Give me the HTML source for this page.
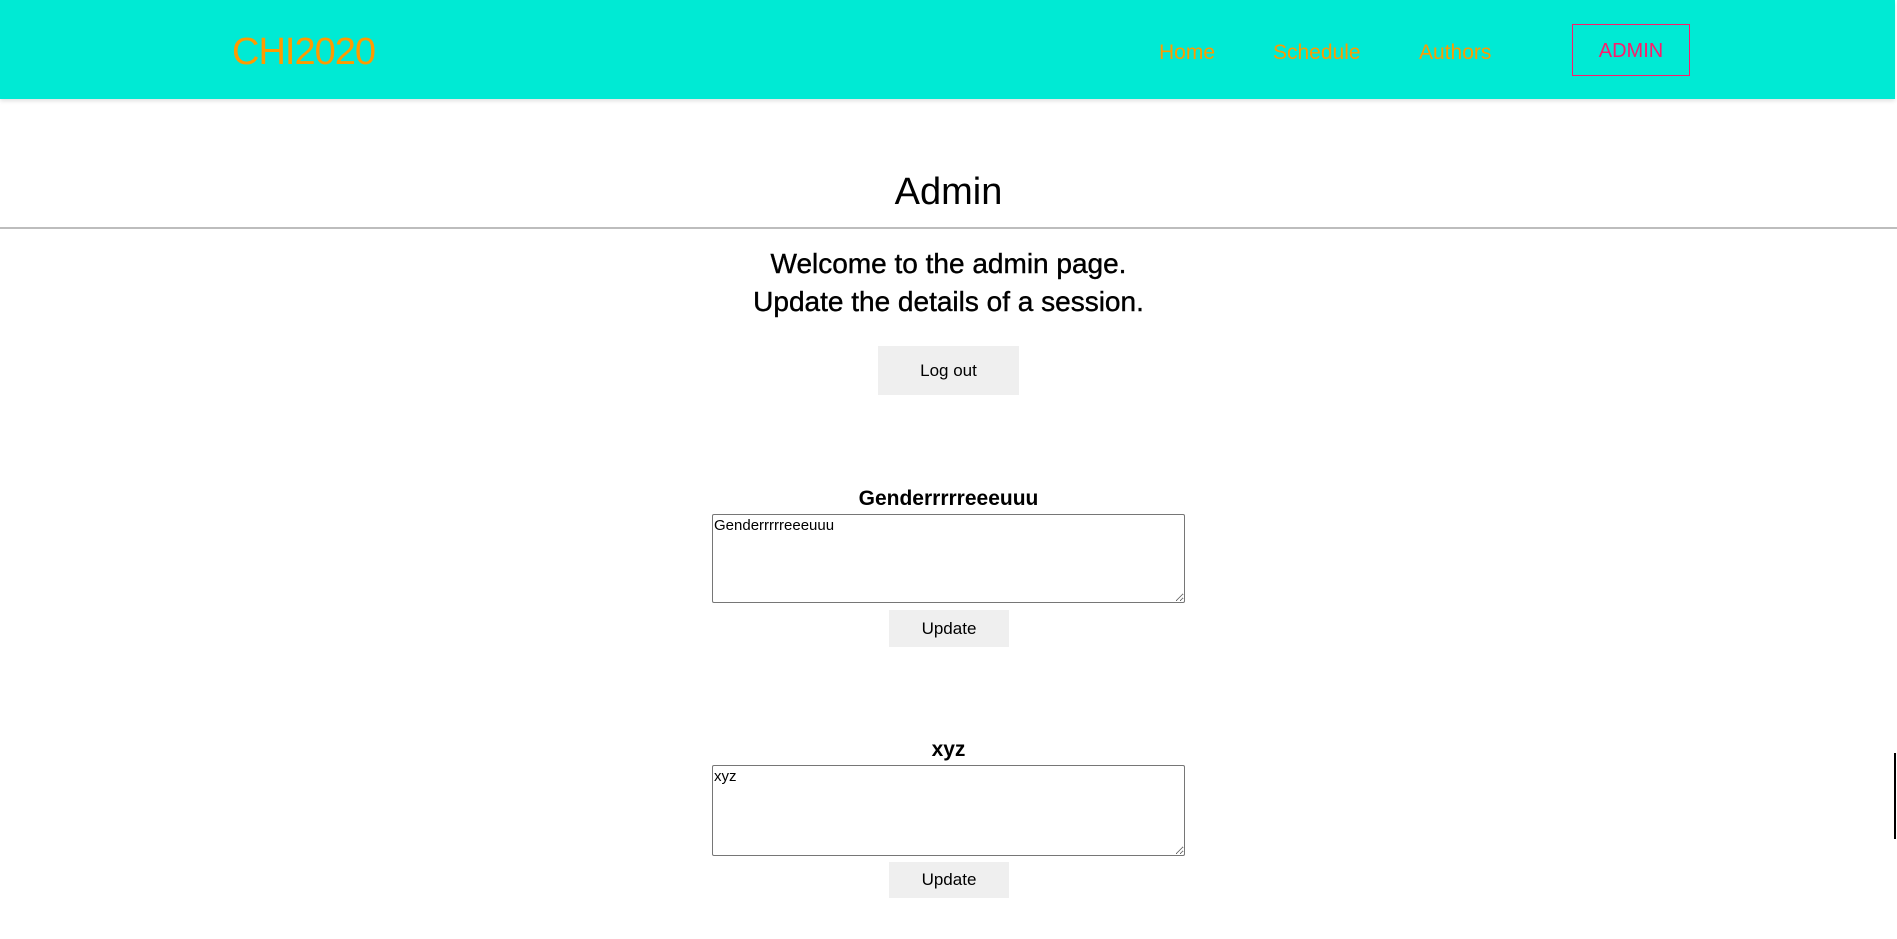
<!DOCTYPE html>
<html><head><meta charset="utf-8"><style>
body{margin:0;width:1897px;height:939px;position:relative;overflow:hidden;background:#fff;font-family:"Liberation Sans",sans-serif;color:#000}
.a{position:absolute}
header{position:absolute;left:0;top:0;width:1895px;height:99px;background:#00ead4;box-shadow:0 2px 4px rgba(0,0,0,.12)}
.nav{color:#ff9a00;font-size:21px;top:41px}
.c{text-align:center;left:0;width:1897px}
.btn{background:#efefef;text-align:center}
textarea{position:absolute;box-sizing:border-box;border:1px solid #767676;border-radius:2px;font-family:"Liberation Sans",sans-serif;font-size:15px;padding:2px 1px;resize:both;margin:0}
</style></head><body>
<header>
<div class="a" style="left:232px;top:31px;font-size:38px;color:#ff9a00;letter-spacing:-1px">CHI2020</div>
<div class="a nav" style="left:1159px">Home</div>
<div class="a nav" style="left:1273px">Schedule</div>
<div class="a nav" style="left:1419px">Authors</div>
<div class="a" style="left:1572px;top:24px;width:116px;height:50px;border:1px solid #ff1a6c;color:#ff1a6c;font-size:20px;line-height:52px;text-align:center">ADMIN</div>
</header>
<div class="a c" style="top:171px;font-size:38px">Admin</div>
<div class="a" style="left:0;top:227px;width:1897px;height:2px;background:#bdbdbd"></div>
<div class="a c" style="top:245px;font-size:28px;line-height:38px;-webkit-text-stroke:0.4px #000">Welcome to the admin page.<br>Update the details of a session.</div>
<div class="a btn" style="left:878px;top:346px;width:141px;height:49px;line-height:50px;font-size:17px">Log out</div>
<div class="a c" style="top:487px;font-size:21px;font-weight:bold">Genderrrrreeeuuu</div>
<textarea style="left:712px;top:514px;width:473px;height:89px">Genderrrrreeeuuu</textarea>
<div class="a btn" style="left:889px;top:610px;width:120px;height:37px;line-height:37px;font-size:17px">Update</div>
<div class="a c" style="top:738px;font-size:21px;font-weight:bold">xyz</div>
<textarea style="left:712px;top:765px;width:473px;height:91px">xyz</textarea>
<div class="a btn" style="left:889px;top:862px;width:120px;height:36px;line-height:36px;font-size:17px">Update</div>
<div class="a" style="left:1894px;top:753px;width:2px;height:86px;background:#000"></div>
</body></html>
